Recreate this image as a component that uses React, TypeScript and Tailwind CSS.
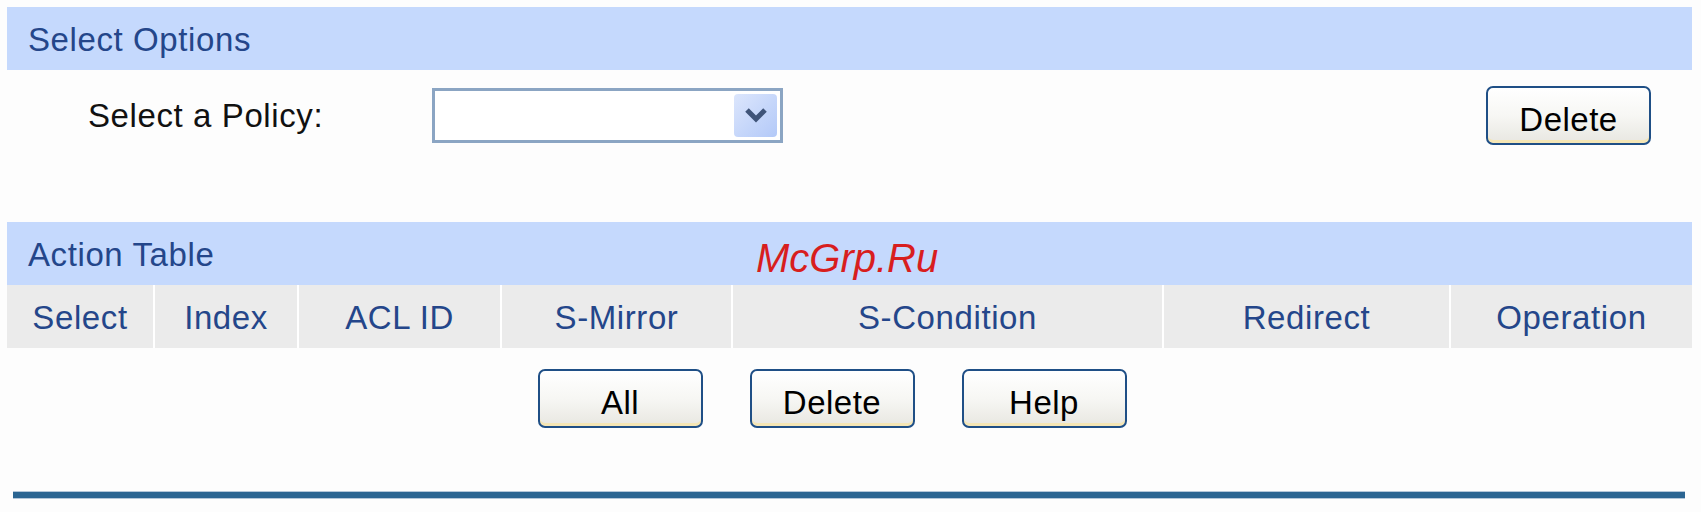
import React from 'react';

const columns = ['Select', 'Index', 'ACL ID', 'S-Mirror', 'S-Condition', 'Redirect', 'Operation'];

const PanelButton: React.FC<{ label: string }> = ({ label }) => (
  <button
    type="button"
    className="flex h-[59px] w-[165px] items-center justify-center rounded-[7px] border-2 border-[#1f4f86] bg-gradient-to-b from-white via-[#f7f7f4] to-[#e8e7e1] pt-[8px] text-[33px] leading-none tracking-[0.5px] text-black shadow-[inset_0_-3px_0_#f5e6b5]"
  >
    {label}
  </button>
);

const SectionBar: React.FC<{ title: string; children?: React.ReactNode }> = ({ title, children }) => (
  <div className="relative flex h-[63px] items-center bg-[#c5d9fd] pl-[21px] pt-[2px] text-[33px] tracking-[0.6px] text-[#24468a]">
    {title}
    {children}
  </div>
);

const App: React.FC = () => {
  return (
    <div className="h-[512px] w-[1701px] bg-[#fdfdfd] pl-[7px] pr-[9px] pt-[7px] font-['Liberation_Sans',Arial,sans-serif]">
      <SectionBar title="Select Options" />

      {/* policy picker row */}
      <div className="flex h-[90px] items-center">
        <span className="w-[425px] pl-[81px] pt-[2px] text-[33px] tracking-[0.6px] text-[#111]">Select a Policy:</span>
        <div className="flex h-[55px] w-[351px] items-center justify-end border-[3px] border-[#8ba5c3] bg-white pr-[3px]">
          <div className="flex h-[43px] w-[43px] items-center justify-center rounded-[4px] bg-gradient-to-br from-[#dce6fc] to-[#b3c9f8]">
            <svg width="24" height="16" viewBox="0 0 24 16">
              <path d="M3 3 L12 12 L21 3" fill="none" stroke="#3f5479" strokeWidth="5" />
            </svg>
          </div>
        </div>
        <div className="ml-auto mr-[41px]">
          <PanelButton label="Delete" />
        </div>
      </div>

      <div className="mt-[62px]">
        <SectionBar title="Action Table">
          <span className="absolute left-[749px] top-[6px] font-['Liberation_Sans',Arial,sans-serif] text-[40px] italic tracking-normal text-[#d81e1e]">
            McGrp.Ru
          </span>
        </SectionBar>
        <div className="grid h-[63px] grid-cols-[146px_142px_201px_229px_429px_285px_1fr] gap-x-[2px] bg-white">
          {columns.map(col => (
            <div
              key={col}
              className="flex items-center justify-center bg-[#ebebeb] pt-[2px] text-[33px] tracking-[0.6px] text-[#24468a]"
            >
              {col}
            </div>
          ))}
        </div>
      </div>

      {/* table actions */}
      <div className="mt-[21px] flex justify-center gap-[47px] pr-[35px]">
        <PanelButton label="All" />
        <PanelButton label="Delete" />
        <PanelButton label="Help" />
      </div>

      <div className="ml-[6px] mr-[7px] mt-[63px] h-[8px] border-y border-[#b3c6d9] bg-[#2b6592]" />
    </div>
  );
};

export default App;
